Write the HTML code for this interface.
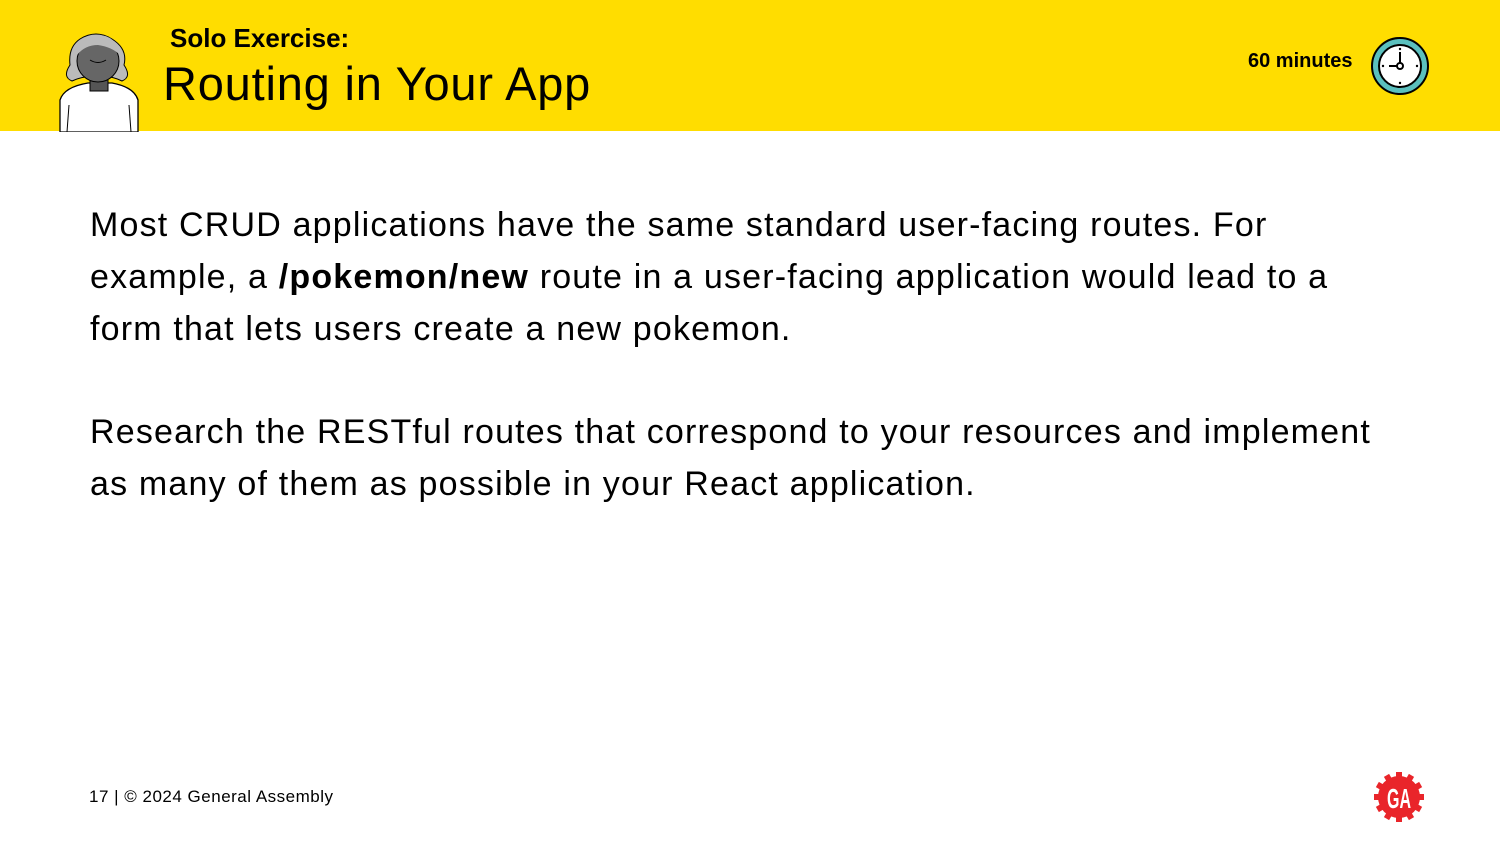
<!DOCTYPE html>
<html><head><meta charset="utf-8"><style>
html,body{margin:0;padding:0;width:1500px;height:844px;overflow:hidden;background:#fff;font-family:"Liberation Sans",sans-serif;color:#000}
.top{position:absolute;left:0;top:0;width:1500px;height:131px;background:#FFDD00}
.solo{position:absolute;left:170px;top:23px;font-size:26px;font-weight:bold}
.title{position:absolute;left:163px;top:56px;font-size:47px;letter-spacing:0.8px}
.min{position:absolute;left:1248px;top:50px;font-size:20px;font-weight:bold}
.p{position:absolute;left:90px;font-size:34px;line-height:52px;width:1400px;white-space:nowrap;letter-spacing:1.18px}
.foot{position:absolute;left:89px;top:787px;font-size:17px;letter-spacing:0.5px}
</style></head><body>
<div class="top"></div>
<svg style="position:absolute;left:50px;top:25px" width="100" height="107" viewBox="0 0 100 107">
<path d="M10 107 L10 75 Q14 62 38 58 L62 58 Q84 62 88 75 L88 107 Z" fill="#fff" stroke="#000" stroke-width="1.3"/>
<path d="M22 56 Q12 52 20 40 Q18 22 30 14 Q46 4 62 14 Q78 24 74 40 Q82 52 72 56 Q60 50 48 52 Q35 50 22 56Z" fill="#bbb" stroke="#000" stroke-width="1"/>
<rect x="40" y="46" width="18" height="20" fill="#555" stroke="#000" stroke-width="1"/>
<ellipse cx="48" cy="36" rx="21" ry="21" fill="#666" stroke="#000" stroke-width="1"/>
<path d="M27 30 Q35 20 48 20 Q62 22 70 30 Q66 10 48 10 Q32 12 27 30Z" fill="#bbb"/>
<path d="M40 35 Q48 40 56 35" fill="none" stroke="#000" stroke-width="1"/>
<line x1="19" y1="80" x2="17" y2="107" stroke="#000"/><line x1="79" y1="80" x2="81" y2="107" stroke="#000"/>
</svg>
<div class="solo">Solo Exercise:</div>
<div class="title">Routing in Your App</div>
<div class="min">60 minutes</div>
<svg style="position:absolute;left:1370px;top:36px" width="60" height="60" viewBox="0 0 60 60">
<circle cx="30" cy="30" r="28" fill="#5BC0BE" stroke="#000" stroke-width="2"/>
<circle cx="30" cy="30" r="21" fill="#fff" stroke="#000" stroke-width="2"/>
<line x1="30" y1="30" x2="30" y2="16" stroke="#000" stroke-width="2"/>
<line x1="30" y1="30" x2="19" y2="30" stroke="#000" stroke-width="2"/>
<circle cx="30" cy="30" r="3" fill="#fff" stroke="#000" stroke-width="2"/>
<circle cx="30" cy="13" r="1.2"/><circle cx="30" cy="47" r="1.2"/><circle cx="13" cy="30" r="1.2"/><circle cx="47" cy="30" r="1.2"/>
</svg>
<div class="p" style="top:199px">Most CRUD applications have the same standard user-facing routes. For<br>example, a <b>/pokemon/new</b> route in a user-facing application would lead to a<br>form that lets users create a new pokemon.</div>
<div class="p" style="top:406px">Research the RESTful routes that correspond to your resources and implement<br>as many of them as possible in your React application.</div>
<div class="foot">17 | © 2024 General Assembly</div>
<svg style="position:absolute;left:1374px;top:772px" width="50" height="50" viewBox="0 0 50 50">
<g fill="#E9252A"><circle cx="25" cy="25" r="21"/>
<g id="t"><rect x="22" y="0" width="6" height="8"/></g>
<use href="#t" transform="rotate(30 25 25)"/><use href="#t" transform="rotate(60 25 25)"/><use href="#t" transform="rotate(90 25 25)"/><use href="#t" transform="rotate(120 25 25)"/><use href="#t" transform="rotate(150 25 25)"/><use href="#t" transform="rotate(180 25 25)"/><use href="#t" transform="rotate(210 25 25)"/><use href="#t" transform="rotate(240 25 25)"/><use href="#t" transform="rotate(270 25 25)"/><use href="#t" transform="rotate(300 25 25)"/><use href="#t" transform="rotate(330 25 25)"/></g>
<text x="25" y="36" text-anchor="middle" font-family="Liberation Sans,sans-serif" font-weight="bold" font-size="28" fill="#fff" textLength="24" lengthAdjust="spacingAndGlyphs">GA</text>
</svg>
</body></html>
